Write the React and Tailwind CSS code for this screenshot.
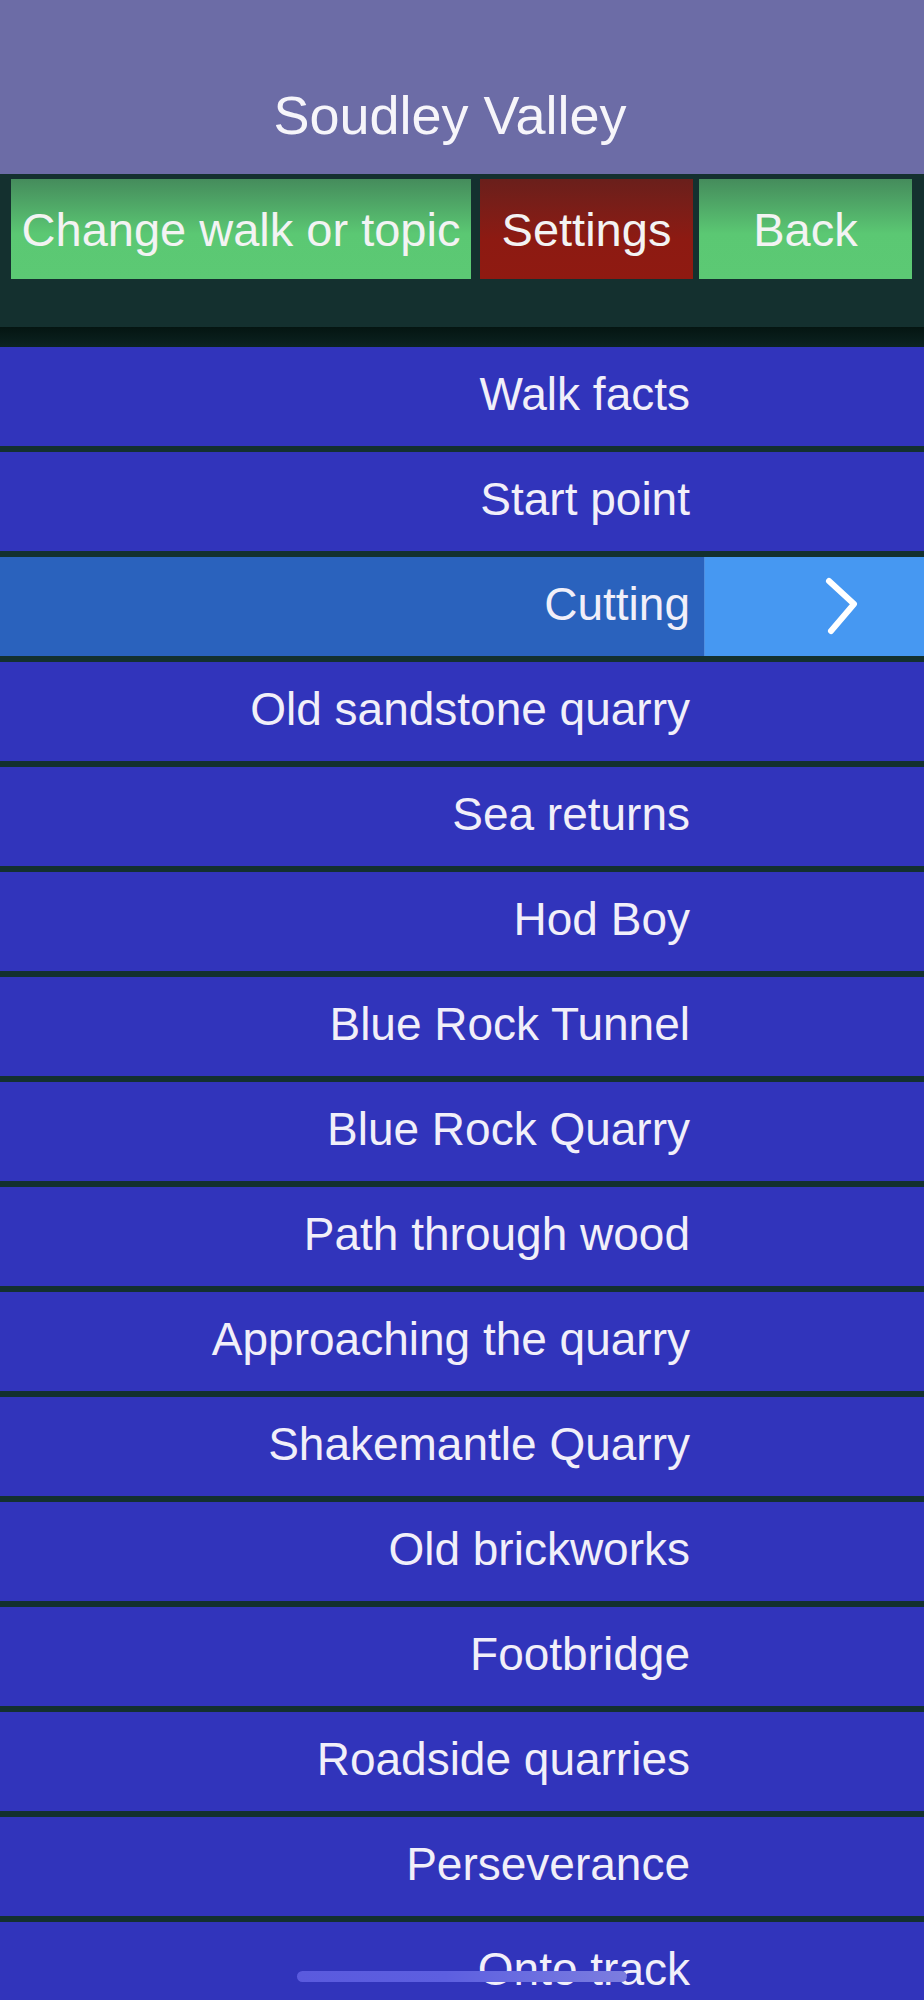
const topics = [
  'Walk facts',
  'Start point',
  'Cutting',
  'Old sandstone quarry',
  'Sea returns',
  'Hod Boy',
  'Blue Rock Tunnel',
  'Blue Rock Quarry',
  'Path through wood',
  'Approaching the quarry',
  'Shakemantle Quarry',
  'Old brickworks',
  'Footbridge',
  'Roadside quarries',
  'Perseverance',
  'Onto track',
]

const SELECTED = 'Cutting'

function Chevron() {
  return (
    <svg width="40" height="64" viewBox="0 0 40 64" fill="none">
      <path
        d="M7 6 L32 29 L9 56"
        stroke="#ffffff"
        strokeWidth="6"
        strokeLinecap="round"
        strokeLinejoin="round"
      />
    </svg>
  )
}

function TopicRow({ title }) {
  const active = title === SELECTED
  return (
    <div className={`flex h-[99px] ${active ? 'bg-[#2a62bd]' : 'bg-[#3134bb]'}`}>
      <div className="flex flex-1 items-center justify-end pr-[14px] pb-[6px] text-[46px] leading-none text-[#f1eff9]">
        {title}
      </div>
      <div
        className={`flex w-[220px] items-center pl-[117px] ${
          active ? 'border-l border-[#4f8fe0] bg-[#4698f2]' : ''
        }`}
      >
        {active && <Chevron />}
      </div>
    </div>
  )
}

export default function App() {
  return (
    <div
      className="relative h-[2000px] overflow-hidden bg-[#13302f]"
      style={{ fontFamily: '"Liberation Sans", Arial, sans-serif' }}
    >
      {/* title bar */}
      <div className="h-[174px] bg-[#6c6ca6] pt-[88px] pr-[24px] text-center text-[54px] leading-none text-[#f6f5fa]">
        Soudley Valley
      </div>

      {/* toolbar */}
      <div className="h-[153px] bg-[#14302f] pt-[5px] pl-[11px]">
        <div className="flex h-[100px]">
          <button className="flex w-[460px] items-center justify-center bg-linear-to-b from-[#458c5c] via-[#5bc873] via-55% to-[#5cc974] text-[47px] leading-none text-[#f3f3f3]">
            Change walk or topic
          </button>
          <button className="ml-[9px] flex w-[213px] items-center justify-center bg-linear-to-b from-[#6a1f1b] via-[#8d1a12] via-60% to-[#8f1a11] text-[47px] leading-none text-[#f3f3f3]">
            Settings
          </button>
          <button className="ml-[6px] flex w-[213px] items-center justify-center bg-linear-to-b from-[#458c5c] via-[#5bc873] via-55% to-[#5cc974] text-[47px] leading-none text-[#f3f3f3]">
            Back
          </button>
        </div>
      </div>

      {/* shadow under toolbar */}
      <div className="h-[20px] bg-linear-to-b from-[#051512] to-[#0c2321]" />

      {/* topic list */}
      <div className="flex flex-col gap-[6px]">
        {topics.map((t) => (
          <TopicRow key={t} title={t} />
        ))}
      </div>

      {/* home indicator */}
      <div className="absolute top-[1971px] left-[297px] h-[11px] w-[330px] rounded-full bg-linear-to-r from-[#5a5ade] via-[#5d5fe0] via-45% to-[#7c7ddf]" />
    </div>
  )
}
